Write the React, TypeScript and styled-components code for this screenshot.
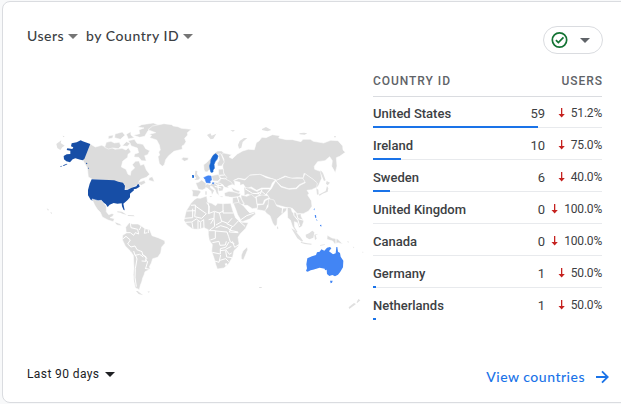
import React from "react";
import styled, { createGlobalStyle } from "styled-components";

const GlobalStyle = createGlobalStyle`
  * { box-sizing: border-box; }
  body { margin: 0; background: #f8f9fa; overflow: hidden; }
`;

const Page = styled.div`
  width: 621px;
  height: 404px;
  padding: 1px 0 1px 2px;
  overflow: hidden;
  font-family: Roboto, sans-serif;
  color: #3c4043;
`;

const Card = styled.section`
  width: 640px;
  height: 402px;
  display: flex;
  flex-direction: column;
  background: #fff;
  border: 1px solid #dadce0;
  border-radius: 8px;
`;

const Header = styled.header`
  width: 618px;
  height: 67px;
  padding: 24px 18px 0 24px;
  display: flex;
  justify-content: space-between;
  align-items: flex-start;
`;

const Title = styled.div`
  display: flex;
  align-items: center;
  height: 20px;
  font: 500 14px/20px Lato, sans-serif;
`;

const TitlePart = styled.span<{ $width: number; $gap?: number; $spacing: number }>`
  width: ${(p) => p.$width}px;
  margin-left: ${(p) => p.$gap ?? 0}px;
  letter-spacing: ${(p) => p.$spacing}px;
  white-space: nowrap;
`;

const Caret = styled.span<{ $color: string; $gap: number; $size?: number }>`
  margin-left: ${(p) => p.$gap}px;
  border: ${(p) => p.$size ?? 5}px solid transparent;
  border-top-color: ${(p) => p.$color};
  border-bottom: 0;
`;

const StatusButton = styled.button`
  width: 60px;
  height: 28px;
  padding: 0 12px 0 7px;
  display: flex;
  align-items: center;
  background: #fff;
  border: 1px solid #dadce0;
  border-radius: 14px;
`;

const Content = styled.div`
  height: 283px;
  display: flex;
`;

const MapPane = styled.div`
  width: 370px;
  padding: 41px 0 0 21px;
`;

const MapSvg = styled.svg`
  display: block;
  .land { fill: #dcdcdc; stroke: #fff; stroke-width: 1.6; stroke-linejoin: round; }
  .isle { fill: #e0e0e0; }
  .line { fill: none; stroke: #fff; stroke-width: 3; stroke-linejoin: round; }
`;

const Table = styled.div`
  width: 229px;
`;

const HeadRow = styled.div`
  height: 28px;
  display: flex;
  justify-content: space-between;
  padding-top: 4px;
  border-bottom: 1px solid #dadce0;
  font: 500 12px/16px Roboto, sans-serif;
  color: #5f6368;
`;

const HeadCell = styled.span<{ $spacing: number }>`
  letter-spacing: ${(p) => p.$spacing}px;
  margin-right: -${(p) => p.$spacing}px;
`;

const Rows = styled.div`
  margin-top: -1px;
`;

const Row = styled.div`
  position: relative;
  height: 32px;
  display: flex;
  padding-top: 9px;
  font-size: 13px;
  line-height: 18px;
  border-bottom: 1px solid #e8eaed;
  &:last-child { border-bottom-color: transparent; }
`;

const Name = styled.span`
  width: 130px;
  font-weight: 500;
`;

const Count = styled.span`
  width: 42px;
  text-align: right;
`;

const Change = styled.span`
  width: 57px;
  height: 18px;
  margin-top: -1px;
  display: flex;
  justify-content: flex-end;
  align-items: center;
  gap: 6px;
  font-size: 12px;
  letter-spacing: -0.2px;
`;

const Bar = styled.span`
  position: absolute;
  left: 0;
  bottom: -1px;
  height: 2px;
  background: #1a73e8;
`;

const Footer = styled.footer`
  width: 618px;
  height: 50px;
  padding: 12px 12px 0 24px;
  display: flex;
  justify-content: space-between;
  align-items: flex-start;
`;

const Range = styled.div`
  display: flex;
  align-items: center;
  font-size: 12px;
  line-height: 20px;
  letter-spacing: 0.4px;
  color: #202124;
`;

const ViewLink = styled.a`
  display: flex;
  align-items: center;
  gap: 11px;
  margin-top: 3px;
  font: 500 14px/20px Lato, sans-serif;
  letter-spacing: 0.5px;
  color: #1a73e8;
`;

const rows = [
  { name: "United States", users: 59, change: "51.2%", bar: 165 },
  { name: "Ireland", users: 10, change: "75.0%", bar: 28 },
  { name: "Sweden", users: 6, change: "40.0%", bar: 17 },
  { name: "United Kingdom", users: 0, change: "100.0%", bar: 0 },
  { name: "Canada", users: 0, change: "100.0%", bar: 0 },
  { name: "Germany", users: 1, change: "50.0%", bar: 3 },
  { name: "Netherlands", users: 1, change: "50.0%", bar: 3 },
];

function DownArrow() {
  return (
    <svg width="7" height="10" viewBox="0 0 7 10">
      <path d="M3 0h1.3v6H6.8L3.65 9.5.5 6H3z" fill="#c5221f" />
    </svg>
  );
}

function WorldMap() {
  return (
    <MapSvg width="340" height="200" viewBox="24 110 340 200">
      <g transform="translate(40 110) scale(.33333)">
        <path className="land" d="M151 102L166 111 185 106 199 112 211 110 225 118 246 115 258 120 265 113 273 126 264 133 263 142 248 154 244 171 258 178 264 193 271 196 273 184 284 174 277 164 286 154 297 153 302 166 312 162 319 180 329 193 319 202 302 208 296 217 313 211 317 219 304 226 296 222 270 237 255 238 254 224 225 213 157 208 145 201 142 174 128 150Z" />
        <path className="land" d="M194 112l5-15 14-3 10 5 15-2 5 11-8 8-17-2-13 3zM247 107l12-12 12 5-9 9zM265 92l18-4 8 12 18 3 8 13 12 6-6 12-9 3 5 16-14-1-9-10-14-1 2-9 12-4-4-14-18-6zM205 78l15-3-2 9-13 3zM225 72l22-6 8 10-14 12-17-5zM259 73l13-8 1 10 10 8-18 4zM280 76l19-5-2-11 15-6-19-3 12-7 35-5 18 7-12 8-22 8-10 17-15 3zM328 203l9-3 4 9 2 6-17-4z" />
        <path className="isle" d="M49 102l15-11-2 8 12 8-7 5-6 8-9-6zM68 77l6 2-4 3zM20 295l7 4-3 3zM31 306l5 2-2 5z" />
        <path fill="#174ea6" d="M151 102L133 147 128 151 121 149 106 145 98 148 90 157 79 154 72 148 71 138 80 133 91 132 91 122 80 120 82 115 97 117 100 112 93 109 95 100 110 97 122 91 128 94ZM139 158l3 1-1 4-3-2zM143 174l4-1-1 4zM60 170l6-3 1 1-5 3zM69 166l12-5 1 2-11 5z" />
        <path fill="#174ea6" d="M155 208l68 3 12 4 14 3 6 9-1 13 9-1 12-6 14-4 4-6h4l2 7-10 6-8 2 1 3-12 10v11l-7 8-13 11 4 20-3-1-5-11-1-9-13 1-11-2-12 5-6 7-6-9-8-4-9 0-22-6-6-3-8-13v-16l5-19z" />
      </g>
      <g transform="translate(110 110) scale(.33333)">
        <path className="land" d="M114 59L128 48 162 41 185 44 190 48 204 50 214 55 244 58 232 68 233 75 224 85 228 95 222 105 216 108 217 118 207 120 192 124 176 137 167 149 163 164 157 169 148 161 144 140 149 135 146 126 151 120 148 105 140 90 119 83 125 76 117 73 137 68Z" />
        <path className="land" d="M214 147l6-5 15 1-1 7-11 4z" />
      </g>
      <g transform="translate(90 190) scale(.33333)">
        <path className="land" d="M6 27l18 5 10-1 9 10 6 8 0 16 7 9 9-3 7 1-4 7-8 4 13 3-3 9 11 3 10 4 4 5-14-2-8-9-19-6-17-9-6-14-9-9-8-13z" />
        <path className="isle" d="M82 64l14 1 14 9-11-2-8-4-9-1zM112 75l19 1 3 3-19-1z" />
        <path className="land" d="M107 112L118 98 127 102 144 102 154 108 165 116 179 119 186 137 204 143 224 152 225 160 215 171 212 189 203 202 188 206 184 219 178 230 181 237 165 245 162 255 158 264 155 276 151 286 148 299 136 293 132 275 130 254 132 235 130 196 121 183 106 168 97 149 98 136 109 129Z" />
        <path className="line" d="M121 98l2 15 20 5 3 14-10-4-5 8-10-8-13 0M154 107l-6 13M165 117l-2 13 9-2M175 119v10M97 148l11-9 13 11-8 12 10 9 12-3 6 11 15 6 2 10 10 5 0 14-13-1M131 183l4 13 14-3 11 8M136 194l5 13-5 29-1 26 4 28M157 192l14 14M165 209l8 6-6 20M165 235l15 3" />
        <path className="isle" d="M143 303l11 9 6 4-14-4-8-9zM172 305l7-1-2 4zM120 178l5 5-2 4z" />
      </g>
      <g transform="translate(170 110) scale(.33333)">
        <path className="isle" d="M111 75l10-5 4 7 14-6-9 15-8 2zM181 61l14-1-6 5zM204 105l5-12 13-9 10 0-14 12-4 17-7 3zM276 57l12-6 16 9-12 4-16-4zM388 70l14-2 10 2-8 4-15-1zM492 79h6v3h-6z" />
        <path className="land" d="M151 126L165 130 185 134 177 141 187 146 202 132 218 123 235 118 253 119 259 98 267 93 276 82 288 83 307 74 329 77 326 84 349 89 368 89 393 95 399 88 421 88 430 94 461 99 482 91 504 92 518 108 519 120 526 127 509 139 499 143 501 168 496 188 485 169 487 152 479 140 465 152 443 155 433 169 434 178 451 184 455 205 445 228 438 235 438 217 427 207 402 190 400 204 381 203 363 205 345 198 320 211 270 193 241 195 225 208 205 205 193 210 195 226 180 222 167 206 160 186 158 168 162 148Z" />
        <path className="isle" d="M452 181l7 8 8 22-5 2-11-27zM470 213l10 5-7 8-5-5zM471 228l4 7-2 10-15 6-9 6-3-3 21-11zM439 235l6 4 1 14-5 1z" />
        <path className="land" d="M190 212L206 206 225 210 238 196 270 193 289 203 317 209 307 219 301 234 275 234 260 241 244 231 229 236 220 223 210 226 210 217Z" />
        <path className="land" d="M317 212L346 200 367 205 401 205 406 216 388 224 378 234 356 236 334 229Z" />
        <path className="land" d="M317 212L333 231 357 238 380 236 390 226 406 218 399 205 405 191 428 207 442 219 440 232 425 239 411 241 417 250 413 255 424 272 426 289 416 303 400 311 382 311 367 295 347 292 318 284 301 269 290 251 304 236Z" />
        <path className="land" d="M222 232l20 3 18 9 16-7 24 0-9 12-10 11-13-4-16 7-18-11-11 5z" />
        <path className="line" d="M225 236l22 14 17 1 11-7 12 10M263 245l8 15M276 238l-5 15" />
        <path className="land" d="M163 249l14-5 25 3 10 5-5 8-22 2-20-3zM183 232l14 7 13 5-4 7-16-7z" />
        <path className="land" d="M188 263l22-3 13 21-11 5-24-5z M213 255l17 4 14-6 14 12 5 29-16 2-15-10-9 0-9-18z M259 260l17-5 18 2 3 6-14 7-4 12-18 0z M263 285l18-2 5-11 11-6 5 12-10 8-5 18-14-3-12-2z" />
        <path className="land" d="M190 280l15-3 15 10 11 13 8 8 15-3 3 7-18 15-24 9-6-12-6-10-5-14z" />
        <path className="line" d="M202 261l5 16M213 329l17-12 23-8M233 299l8 10" />
        <path className="land" d="M296 266l16 4 8 18 18 7 13-1-3 9-17 14-9 9-1 18-6 5-7-10-8-22-9-6-7-8 10-12z" />
        <path className="land" d="M352 292l11 2 4 13 8 0 8 6 10-2 0 7 8 16-5 15-9 5-5-16-9-3 1 16 9 15-4 2-12-20-6-18-8-7z" />
        <path className="line" d="M370 301l2 15 12 15 5 17M380 311l4 15 14 4M338 293l-2 17" />
        <path className="isle" d="M321 348l4 6-1 4-3-3zM364 355l10 6 17 20 8 11-3 3-14-10zM393 396l19 4 13 1-1 3-20-2-12-4zM407 374l10-4 10-8 6 5-3 16-12 5-10-6zM433 374l12-3-8 5 3 10-5 4zM450 405l15-2-1 2-13 2z" />
        <path className="land" d="M472 376l14 8 17 3 11 11 5 4-15-4-9 4-7-9-17-5z" />
        <path className="line" d="M498 383v22" />
        <path className="isle" d="M532 393l5 4-3 2zM548 410l5 4-2 2zM579 425l1 4-3 0zM536 593l16-13 6 3-20 15zM560 578l5-10 6 4-10 9z" transform="translate(0 -1)" />
        <path className="land" d="M102 178l-1-14 10-7 12-13 8-13 12-8 12 0 6 6-7 5-14-1-11 9-7 17-3 19-7 8-7-1z" />
        <path className="land" d="M145 132l8-1 5 13 5 12-8 12-12 0-1-8 6-10zM146 178l14-1 1 13 10 13-7 4-15-3-3-12zM124 197l22-4 6 11-3 10-20-1zM150 206l14-1 19 11 5 7-15 6 4 5-12-2-8-9-15-5zM130 216l22 4 9 12-3 10-14 2 4 13-9-8-3-10-10-10-8-2zM65 239l22 2 6 4-10 15-16-1 1-12zM77 219l10-3 8-6 13 10-1 15-10 5-12-2z" />
        <path className="line" d="M130 216l13 11 17-1M134 229l20 5M144 222l1 22M149 196l15-1M151 206l-6 8" />
        <path className="isle" d="M76 182l6 1-1 9 9 12-5 5-12 1 6-6-5-6zM103 230l8-8 9 3 1 8 12 9-2 2-5 10-2-10-12-11zM106 244h4v10h-4zM118 258l8 1-3 3zM148 258l12 2-4 2zM177 259l7-2-5 4z" />
        <path fill="#1967d2" stroke="#1967d2" strokeWidth="2" d="M138 131l6 7-3 10-5 6-4 9 1 12-4 5 0 6-6 1-3-10-1-10 3-9 1-9 4-8 4-6z" />
        <path fill="#4285f4" stroke="#4285f4" strokeWidth="1.5" d="M109 199l6-2 8 1 2 12-5 4 1 5-12-1-3-7-1-6zM101 203l6-3-2 7zM126 219l6-1-2 4z" />
        <path fill="#1967d2" d="M66 195l6 1 0 7-5 1z" />
        <path className="land" d="M63 280L73 269 81 264 91 265 110 258 113 277 125 280 137 287 143 280 159 281 182 280 189 304 197 324 207 333 216 337 235 338 226 356 211 371 204 382 207 400 205 409 192 422 188 440 176 461 162 474 142 477 137 463 132 444 125 424 127 404 118 391 115 375 115 359 102 353 85 358 68 357 51 345 42 331 46 314 49 302Z" />
        <path className="line" d="M63 286l13-1v17l-26 1M76 288l33 23-14 14-21-5 2-18M68 296v27l-25 2M47 337l18-1 14-9 12 9 10-7 1 25M66 337l3 19M84 333v24M92 337v18M110 278l8 11-3 22 18-7 15 5 14-7M115 280l3 28M159 280v29l31 0M133 306l-1 18-10 17M116 329l16-4 2 24-17 13M148 308l7 27-17 10M155 333l18 7 13-15M170 341l19 9 16-17M185 351l-7 15 27 2M207 333l18 16M137 354l15-7 20 6 9 8 23 5M118 362l18 0v23l-15 5M136 363l35 3 5 14 5 16 12 5M127 398l20-4 3 12 16-1 3-11M177 396l-10 16-16 4v16l-24-5M151 422l17-2 10 13 7-4M167 418l17-9M187 394l7 18 12-8M152 435l-5 22-13-4M150 451l17-5 9 9M167 423l3 18 16 2" />
        <path className="land" d="M231 411l2 8-7 17-6 14-6-4 0-11 5-12z" />
        <path fill="#fff" d="M164 461l6-2 2 6-5 3z" />
        <path className="isle" d="M267 531h8v3h-7z" />
      </g>
      <g transform="translate(260 190) scale(.33333)" fill="#4285f4">
        <path d="M142 205l14-6 12-4 3-8 8-2 5-7 9 4 8-9 9-2 4 4-7 9 12 9 8-3 2-19 3 0 2 14 6 4 2 11 8 12-1 20-8 13-7 9-9 5-8-4-9 3-7-6-1-13-5 2-1-5-15-3-20 6-7 2-9 4-5-2 3-8-2-12zM210 272h8l-2 6-4 2zM164 76l4-1 1 8-3 1zM168 88l3 1-2 3zM172 91l2 1-1 2zM180 105l4-1 0 6-4-3zM162 56l2-1-1 6-2-1z" />
      </g>
    </MapSvg>
  );
}

export default function App() {
  return (
    <>
      <GlobalStyle />
      <Page>
        <Card>
          <Header>
            <Title>
              <TitlePart $width={38} $spacing={0.5}>Users</TitlePart>
              <Caret $color="#757575" $gap={3} />
              <TitlePart $width={94} $gap={8} $spacing={0.55}>by Country ID</TitlePart>
              <Caret $color="#757575" $gap={3} />
            </Title>
            <StatusButton aria-label="Data quality">
              <svg width="18" height="18" viewBox="0 0 18 18" fill="none" stroke="#137333" strokeWidth="1.8">
                <circle cx="9" cy="9" r="7.6" />
                <path d="M5.2 9.2l2.6 2.6 5.4-5.5" />
              </svg>
              <Caret $color="#5f6368" $gap={12} $size={5} />
            </StatusButton>
          </Header>
          <Content>
            <MapPane>
              <WorldMap />
            </MapPane>
            <Table>
              <HeadRow>
                <HeadCell $spacing={0.95}>COUNTRY ID</HeadCell>
                <HeadCell $spacing={0.95}>USERS</HeadCell>
              </HeadRow>
              <Rows>
                {rows.map((row) => (
                  <Row key={row.name}>
                    <Name>{row.name}</Name>
                    <Count>{row.users}</Count>
                    <Change>
                      <DownArrow />
                      {row.change}
                    </Change>
                    <Bar style={{ width: row.bar }} />
                  </Row>
                ))}
              </Rows>
            </Table>
          </Content>
          <Footer>
            <Range>
              Last 90 days
              <Caret $color="#202124" $gap={6} />
            </Range>
            <ViewLink>
              View countries
              <svg width="13" height="14" viewBox="0 0 13 14" fill="none" stroke="#1a73e8" strokeWidth="1.8">
                <path d="M0 7h11M6 1.3L11.7 7 6 12.7" />
              </svg>
            </ViewLink>
          </Footer>
        </Card>
      </Page>
    </>
  );
}
